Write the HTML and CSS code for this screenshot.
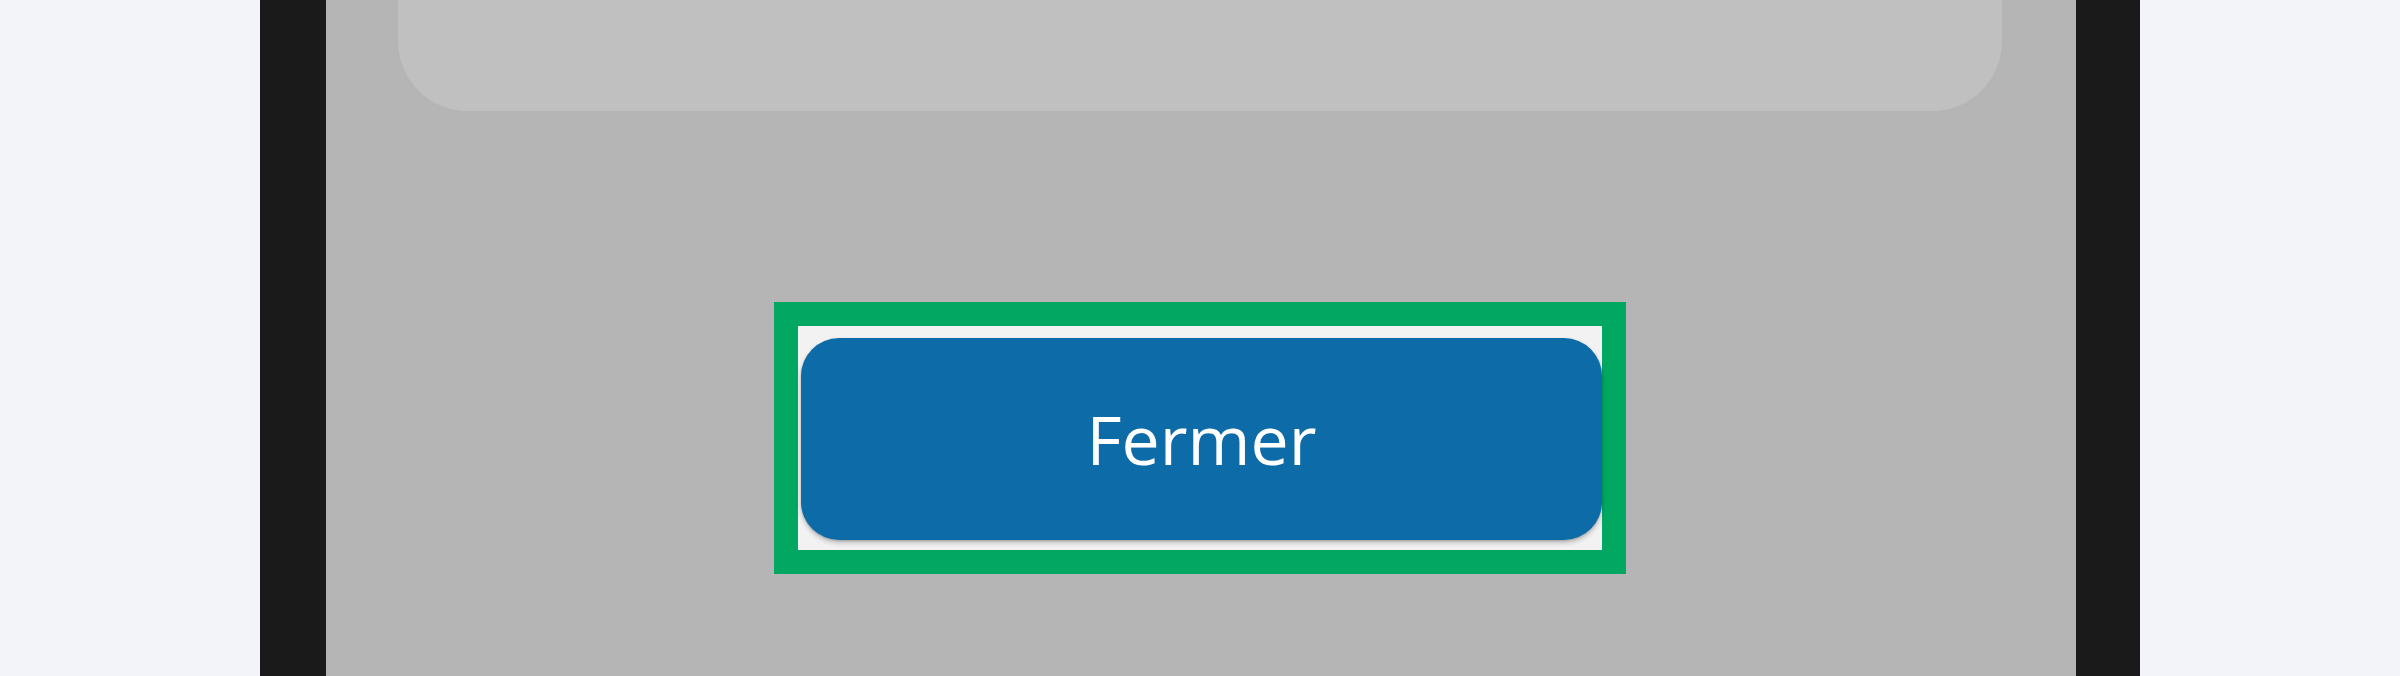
FILE: index.html
```html
<!DOCTYPE html>
<html lang="fr">
<head>
<meta charset="utf-8">
<title>Fermer</title>
<link rel="stylesheet" href="styles.css">
</head>
<body>
<div class="page">
  <div class="frame">
    <div class="screen">
      <div class="card"></div>
      <div class="highlight">
        <div class="slot">
          <button class="btn" type="button">Fermer</button>
        </div>
      </div>
    </div>
  </div>
</div>
</body>
</html>
```

FILE: styles.css
```css
html, body {
  margin: 0;
  padding: 0;
  background: #f3f4f9;
  height: 676px;
  overflow: hidden;
}
.page {
  display: flex;
  justify-content: center;
  height: 676px;
}
.frame {
  width: 1750px;
  height: 676px;
  border-left: 66px solid #1a1a1a;
  border-right: 64px solid #1a1a1a;
  background: #b5b5b5;
  overflow: hidden;
}
.screen {
  display: flex;
  flex-direction: column;
  align-items: center;
}
.card {
  width: 1604px;
  height: 111px;
  background: #c0c0c0;
  border-radius: 0 0 70px 70px;
  margin-left: -2px;
}
.highlight {
  margin-top: 191px;
  border: 24px solid #02a862;
  margin-left: -2px;
}
.slot {
  width: 801px;
  height: 202px;
  padding: 12px 0 10px 3px;
  background: #f2f2f2;
  display: flex;
}
.btn {
  flex: 1;
  margin: 0;
  border: 0;
  border-radius: 38px;
  background: #0d6ba8;
  color: #ffffff;
  font-family: "Open Sans", "Noto Sans", sans-serif;
  font-size: 68px;
  font-weight: 400;
  letter-spacing: 0;
  box-shadow: 0 3px 5px rgba(0,0,0,0.22), 0 1px 2px rgba(0,0,0,0.15);
  padding: 0 0 2px 0;
  cursor: pointer;
}
```
